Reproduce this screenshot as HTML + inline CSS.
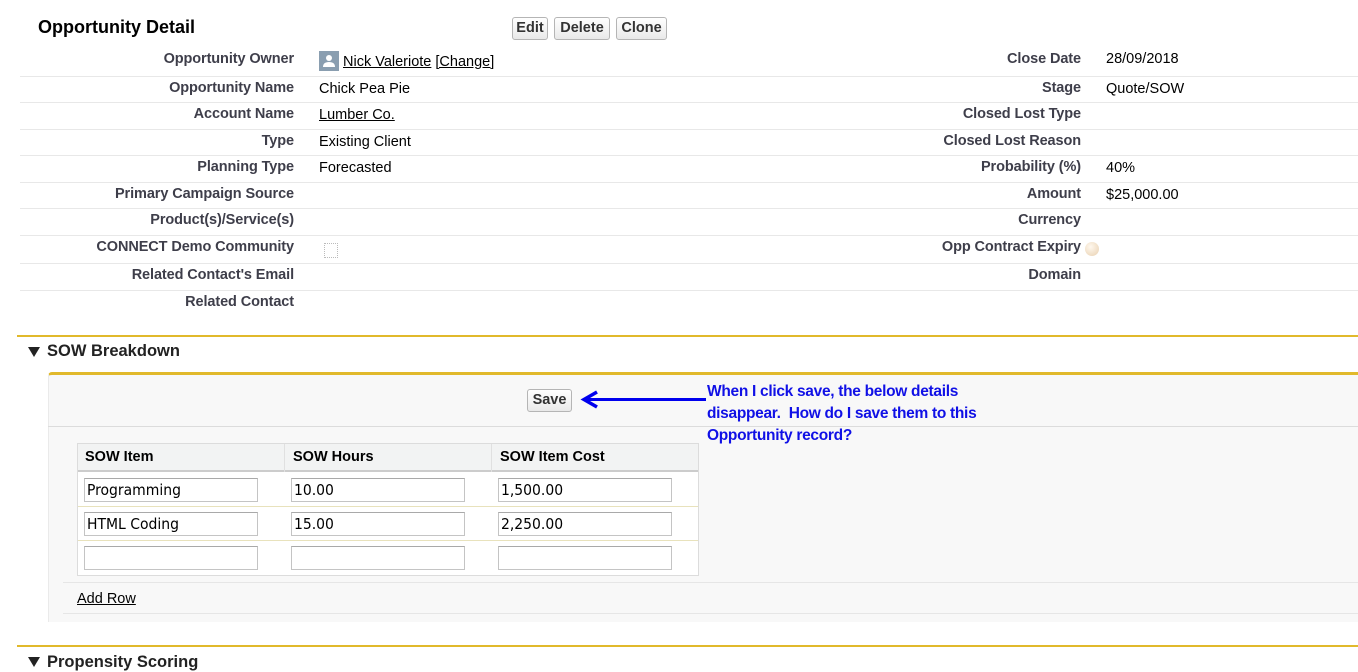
<!DOCTYPE html>
<html><head><meta charset="utf-8"><style>
*{margin:0;padding:0;box-sizing:border-box}
body{width:1358px;height:661px;overflow:hidden;background:#fff;font-family:"Liberation Sans",Arial,sans-serif;position:relative;color:#000}
.a{position:absolute;white-space:nowrap}
.lbl{position:absolute;font-weight:bold;font-size:14.5px;color:#3e3e4a;text-align:right;white-space:nowrap;letter-spacing:-0.1px}
.val{position:absolute;font-size:14.5px;white-space:nowrap}
.hl{position:absolute;height:1px;background:#e8e8e8}
.btn{position:absolute;border:1px solid #b5b5b5;border-radius:3px;background:linear-gradient(#fff,#e9e9e9);font-weight:bold;font-size:14.5px;color:#333;text-align:center;line-height:21px;height:23px}
.inp{position:absolute;background:#fff;border:1px solid #c4c4c4;border-top-color:#a9a9a9;height:24px;font-family:"DejaVu Sans Condensed","Liberation Sans Narrow",sans-serif;font-size:15.5px;line-height:22px;padding-left:2px;width:174px}
.gold{position:absolute;height:2px;background:#e1b92b}
u{text-decoration:underline}
</style></head><body>
<div class="a" style="left:38px;top:17px;font-size:18px;font-weight:bold">Opportunity Detail</div>
<div class="btn" style="left:512px;top:17px;width:36px">Edit</div>
<div class="btn" style="left:554px;top:17px;width:56px">Delete</div>
<div class="btn" style="left:616px;top:17px;width:51px">Clone</div>

<div class="hl" style="left:20px;width:1338px;top:76px"></div>
<div class="hl" style="left:20px;width:1338px;top:102px"></div>
<div class="hl" style="left:20px;width:1338px;top:129px"></div>
<div class="hl" style="left:20px;width:1338px;top:155px"></div>
<div class="hl" style="left:20px;width:1338px;top:182px"></div>
<div class="hl" style="left:20px;width:1338px;top:208px"></div>
<div class="hl" style="left:20px;width:1338px;top:235px"></div>
<div class="hl" style="left:20px;width:1338px;top:263px"></div>
<div class="hl" style="left:20px;width:1338px;top:290px"></div>

<div class="lbl" style="right:1064px;top:51px">Opportunity Owner</div>
<div class="lbl" style="right:1064px;top:80px">Opportunity Name</div>
<div class="lbl" style="right:1064px;top:106px">Account Name</div>
<div class="lbl" style="right:1064px;top:133px">Type</div>
<div class="lbl" style="right:1064px;top:159px">Planning Type</div>
<div class="lbl" style="right:1064px;top:186px">Primary Campaign Source</div>
<div class="lbl" style="right:1064px;top:212px">Product(s)/Service(s)</div>
<div class="lbl" style="right:1064px;top:239px">CONNECT Demo Community</div>
<div class="lbl" style="right:1064px;top:267px">Related Contact's Email</div>
<div class="lbl" style="right:1064px;top:294px">Related Contact</div>

<div class="a" style="left:319px;top:51px;width:20px;height:20px;background:#8a9eb0">
<svg width="20" height="20" viewBox="0 0 20 20"><circle cx="10" cy="7" r="3" fill="#fff"/><path d="M4 16 Q4 11 10 11 Q16 11 16 16Z" fill="#fff"/></svg></div>
<div class="val" style="left:343px;top:54px"><u>Nick Valeriote</u> <u>[Change]</u></div>
<div class="val" style="left:319px;top:81px">Chick Pea Pie</div>
<div class="val" style="left:319px;top:107px"><u>Lumber Co.</u></div>
<div class="val" style="left:319px;top:134px">Existing Client</div>
<div class="val" style="left:319px;top:160px">Forecasted</div>
<div class="a" style="left:324px;top:243px;width:14px;height:15px;border:1px dotted #bbb"></div>

<div class="lbl" style="right:277px;top:51px">Close Date</div>
<div class="lbl" style="right:277px;top:80px">Stage</div>
<div class="lbl" style="right:277px;top:106px">Closed Lost Type</div>
<div class="lbl" style="right:277px;top:133px">Closed Lost Reason</div>
<div class="lbl" style="right:277px;top:159px">Probability (%)</div>
<div class="lbl" style="right:277px;top:186px">Amount</div>
<div class="lbl" style="right:277px;top:212px">Currency</div>
<div class="lbl" style="right:277px;top:239px">Opp Contract Expiry</div>
<div class="lbl" style="right:277px;top:267px">Domain</div>
<div class="a" style="left:1085px;top:242px;width:14px;height:14px;border-radius:50%;background:radial-gradient(circle at 40% 35%,#fff8ee,#e8d0b0)"></div>
<div class="val" style="left:1106px;top:51px">28/09/2018</div>
<div class="val" style="left:1106px;top:81px">Quote/SOW</div>
<div class="val" style="left:1106px;top:160px">40%</div>
<div class="val" style="left:1106px;top:187px">$25,000.00</div>

<div class="gold" style="left:17px;width:1341px;top:335px"></div>
<svg class="a" style="left:28px;top:347px" width="12" height="10"><path d="M0 0 H12 L6 10Z" fill="#222"/></svg>
<div class="a" style="left:47px;top:342px;font-size:16.5px;font-weight:bold;color:#222">SOW Breakdown</div>

<div class="a" style="left:48px;top:372px;width:1310px;height:250px;background:#f8f8f8;border-top:3px solid #e1b92b;border-left:1px solid #eaeaea;border-top-left-radius:4px"></div>
<div class="hl" style="left:48px;width:1310px;top:426px;background:#dcdcdc"></div>
<div class="btn" style="left:527px;top:389px;width:45px">Save</div>

<div class="a" style="left:77px;top:443px;width:622px;height:133px;background:#fff;border:1px solid #dcdcdc"></div>
<div class="a" style="left:78px;top:444px;width:620px;height:28px;background:#f2f3f3;border-bottom:2px solid #ccc"></div>
<div class="a" style="left:284px;top:444px;width:1px;height:28px;background:#e0e0e0"></div>
<div class="a" style="left:491px;top:444px;width:1px;height:28px;background:#e0e0e0"></div>
<div class="a" style="left:85px;top:449px;font-size:14.5px;font-weight:bold">SOW Item</div>
<div class="a" style="left:293px;top:449px;font-size:14.5px;font-weight:bold">SOW Hours</div>
<div class="a" style="left:500px;top:449px;font-size:14.5px;font-weight:bold">SOW Item Cost</div>
<div class="a" style="left:78px;top:506px;width:620px;height:1px;background:#e8e2bc"></div>
<div class="a" style="left:78px;top:540px;width:620px;height:1px;background:#e8e2bc"></div>
<div class="inp" style="left:84px;top:478px">Programming</div>
<div class="inp" style="left:291px;top:478px">10.00</div>
<div class="inp" style="left:498px;top:478px">1,500.00</div>
<div class="inp" style="left:84px;top:512px">HTML Coding</div>
<div class="inp" style="left:291px;top:512px">15.00</div>
<div class="inp" style="left:498px;top:512px">2,250.00</div>
<div class="inp" style="left:84px;top:546px"></div>
<div class="inp" style="left:291px;top:546px"></div>
<div class="inp" style="left:498px;top:546px"></div>

<div class="hl" style="left:63px;width:1295px;top:582px;background:#e6e6e6"></div>
<div class="val" style="left:77px;top:591px;font-size:14.5px"><u>Add Row</u></div>
<div class="hl" style="left:63px;width:1295px;top:613px;background:#e6e6e6"></div>

<svg class="a" style="left:580px;top:390px" width="130" height="20"><line x1="6" y1="9.5" x2="126" y2="9.5" stroke="#0000ee" stroke-width="3"/><path d="M17 2 L4 9.5 L17 17" fill="none" stroke="#0000ee" stroke-width="3.5"/></svg>
<div class="a" style="left:707px;top:381px;font-size:15.5px;font-weight:bold;color:#1010e6;line-height:22px;letter-spacing:-0.3px">When I click save, the below details<br>disappear.&nbsp; How do I save them to this<br>Opportunity record?</div>

<div class="gold" style="left:17px;width:1341px;top:645px"></div>
<svg class="a" style="left:28px;top:657px" width="12" height="10"><path d="M0 0 H12 L6 10Z" fill="#222"/></svg>
<div class="a" style="left:47px;top:653px;font-size:16.5px;font-weight:bold;color:#222">Propensity Scoring</div>
</body></html>
